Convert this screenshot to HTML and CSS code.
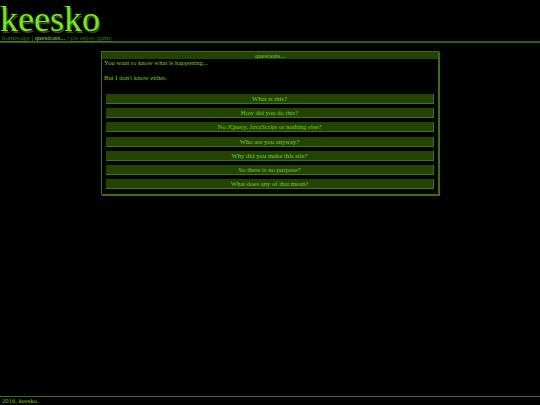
FILE: index.html
```html
<!DOCTYPE html>
<html lang="en">
<head>
<meta charset="utf-8">
<title>keesko</title>
<link rel="stylesheet" href="styles.css">
</head>
<body>
<header class="header">
  <h1 class="logo">keesko</h1>
  <nav class="nav"><a class="nav-link">homepage</a> | <a class="nav-current">questions...</a> | <a class="nav-link">pls enjoy game</a></nav>
</header>
<main class="main">
  <section class="window">
    <h2 class="window-title">questions...</h2>
    <div class="window-body">
      <p class="para">You want to know what is happening...</p>
      <p class="para">But I don't know either.</p>
      <div class="buttons">
        <a class="btn">What is this?</a>
        <a class="btn">How did you do this?</a>
        <a class="btn">No JQuery, JavaScript or nothing else?</a>
        <a class="btn">Who are you anyway?</a>
        <a class="btn">Why did you make this site?</a>
        <a class="btn">So there is no purpose?</a>
        <a class="btn">What does any of that mean?</a>
      </div>
    </div>
  </section>
</main>
<footer class="footer">2016, keesko.</footer>
</body>
</html>
```
FILE: styles.css
```css
* { box-sizing: border-box; }
html, body { height: 100%; }
body {
  margin: 0;
  background: #000;
  color: #77cc22;
  font-family: "Liberation Serif", "Times New Roman", serif;
  font-size: 6.67px;
  line-height: 7.5px;
  display: flex;
  flex-direction: column;
  overflow: hidden;
}
.header {
  height: 43px;
  padding-top: 5px;
  border-bottom: 2px solid #2f5f0c;
}
.logo {
  margin: 0;
  font-size: 36px;
  line-height: 28px;
  font-weight: normal;
  color: #77e61a;
  text-shadow: 1.5px 1.5px 0 #2a5500;
}
.nav { margin-top: 1px; padding-left: 2px; color: #66aa33; font-size: 6.8px; }
.nav-link { color: #3f7512; text-decoration: underline; }
.nav-current { color: #99dd55; }
.main {
  flex: 1;
  display: flex;
  justify-content: center;
  align-items: flex-start;
  padding-top: 8px;
}
.window {
  width: 338px;
  height: 144px;
  border: 1px solid #3a7010;
  box-shadow: 1px 1px 0 #3a7010;
}
.window-title {
  margin: 0;
  height: 7px;
  background: #224400;
  font-size: 6.67px;
  line-height: 7px;
  font-weight: normal;
  text-align: center;
  color: #77cc22;
}
.window-body { padding: 0 2px; }
.para { margin: 0 0 7.5px; }
.buttons {
  display: flex;
  flex-direction: column;
  gap: 4.45px;
  padding: 5px 2px 0;
}
.btn {
  height: 9.8px;
  background: #224400;
  border-right: 1px solid #3f7512;
  border-bottom: 1px solid #3f7512;
  text-align: center;
  line-height: 9.2px;
  color: #77cc22;
}
.footer {
  height: 9px;
  border-top: 1px solid #3a7010;
  padding-left: 2px;
  line-height: 8px;
  color: #77cc11;
}
```
